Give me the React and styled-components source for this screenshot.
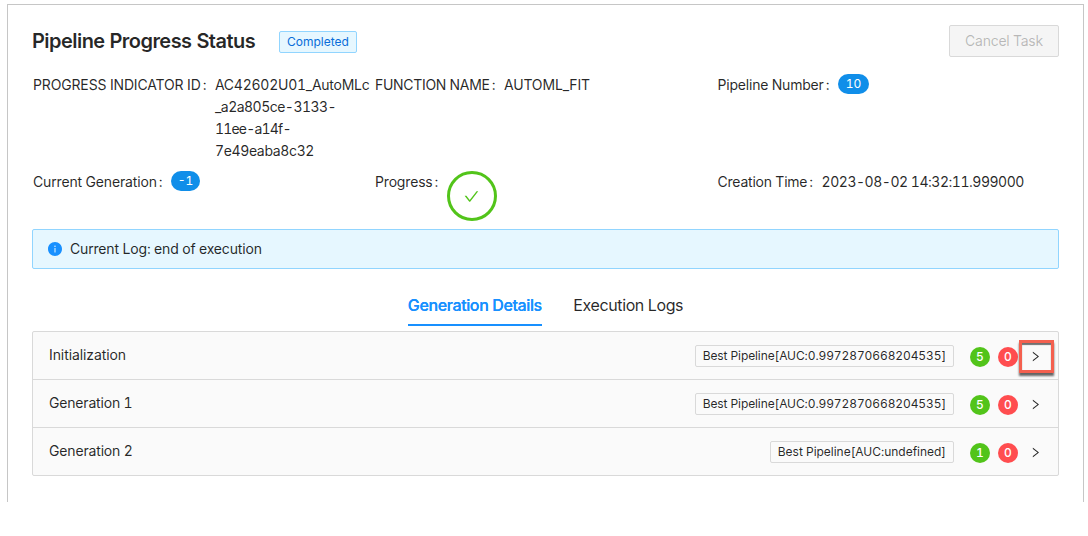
import React from "react";
import styled, { createGlobalStyle } from "styled-components";
import { AiOutlineCheck, AiOutlineRight, AiFillInfoCircle } from "react-icons/ai";

const GlobalStyle = createGlobalStyle`
  *, *::before, *::after { box-sizing: border-box; }
  body {
    margin: 0;
    background: #fff;
    color: rgba(0, 0, 0, 0.85);
    font-family: Inter, "Liberation Sans", sans-serif;
    font-size: 14px;
    line-height: 22px;
    font-variant-numeric: tabular-nums;
  }
`;

const Panel = styled.main`
  width: 1077px;
  height: 498px;
  margin: 4px 0 0 7px;
  padding: 20px 24px 0;
  border: 1px solid #c6c6c6;
  border-bottom: 0;
`;

const Header = styled.header`
  display: flex;
  align-items: flex-start;
  height: 32px;
`;

const Title = styled.h1`
  width: 223px;
  margin: 0 24px 0 0;
  font-size: 20px;
  font-weight: 600;
  line-height: 32px;
  letter-spacing: -0.54px;
  white-space: nowrap;
`;

const Tag = styled.span`
  flex: none;
  height: 22px;
  margin-top: ${(p) => (p.$info ? 6 : 1)}px;
  padding: 0 7px;
  border: 1px solid ${(p) => (p.$info ? "#91d5ff" : "#d9d9d9")};
  border-radius: 2px;
  background: ${(p) => (p.$info ? "#e6f7ff" : "#fafafa")};
  color: ${(p) => (p.$info ? "#096dd9" : "inherit")};
  font-size: 12px;
  line-height: 20px;
  letter-spacing: ${(p) => p.$tracking || 0}px;
  white-space: nowrap;
`;

const CancelButton = styled.button`
  width: 110px;
  height: 32px;
  margin-left: auto;
  padding: 0;
  border: 1px solid #d9d9d9;
  border-radius: 2px;
  background: #f5f5f5;
  color: rgba(0, 0, 0, 0.25);
  font: inherit;
  letter-spacing: -0.254px;
`;

const Descriptions = styled.dl`
  display: grid;
  grid-template-columns: 342px 342.5px 342px;
  grid-template-rows: 97px 58px;
  margin: 17px 0 0 1px;
`;

const Item = styled.div`
  display: flex;
  align-items: flex-start;
`;

const Label = styled.dt`
  letter-spacing: ${(p) => p.$tracking}px;
  white-space: nowrap;

  &::after {
    content: ":";
    margin: 0 8.5px 0 2px;
    letter-spacing: 0;
  }
`;

const Value = styled.dd`
  margin: 0;
  letter-spacing: ${(p) => p.$tracking || 0}px;
  white-space: nowrap;
`;

const Line = styled.div`
  letter-spacing: ${(p) => p.$tracking}px;
`;

const Pill = styled.span`
  display: block;
  width: ${(p) => p.$width}px;
  height: 20px;
  border-radius: 10px;
  background: #108ee9;
  color: #fff;
  font-size: 12px;
  line-height: 20px;
  text-align: center;
`;

const ProgressCircle = styled.div`
  display: flex;
  align-items: center;
  justify-content: center;
  width: 50px;
  height: 50px;
  border: 3px solid #52c41a;
  border-radius: 50%;
  color: #52c41a;

  svg {
    margin-right: 1px;
  }
`;

const Alert = styled.div`
  display: flex;
  align-items: center;
  height: 40px;
  padding: 0 14px;
  border: 1px solid #91d5ff;
  border-radius: 2px;
  background: #e6f7ff;
  letter-spacing: -0.165px;

  svg {
    margin-right: 7px;
    color: #1890ff;
  }
`;

const Tabs = styled.nav`
  display: flex;
  justify-content: center;
  gap: 31.5px;
  height: 57px;
  margin-top: 5px;
`;

const Tab = styled.div`
  height: 52px;
  padding-top: 19px;
  border-bottom: 2px solid ${(p) => (p.$active ? "#1890ff" : "transparent")};
  color: ${(p) => (p.$active ? "#1890ff" : "inherit")};
  font-size: 16px;
  font-weight: ${(p) => (p.$active ? 500 : 400)};
  line-height: 24px;
  letter-spacing: ${(p) => p.$tracking}px;
  text-shadow: ${(p) => (p.$active ? "0 0 0.25px currentColor" : "none")};
  white-space: nowrap;
`;

const Collapse = styled.section`
  border: 1px solid #d9d9d9;
  border-radius: 2px;
  background: #fafafa;
`;

const Row = styled.div`
  display: flex;
  align-items: flex-start;
  height: 48px;
  padding: 12px 16px;

  & + & {
    border-top: 1px solid #d9d9d9;
  }
  &:first-child {
    height: 47px;
  }
`;

const RowName = styled.span`
  margin-right: auto;
  letter-spacing: ${(p) => p.$tracking}px;
`;

const Counts = styled.div`
  display: flex;
  gap: 8px;
  margin: 3px 0 0 16px;
`;

const Count = styled.span`
  width: 20px;
  height: 20px;
  border-radius: 50%;
  background: ${(p) => (p.$failed ? "#ff4d4f" : "#52c41a")};
  color: #fff;
  font-size: 12px;
  font-weight: 500;
  line-height: 20px;
  text-align: center;
`;

const Expand = styled.span`
  position: relative;
  display: flex;
  align-items: center;
  justify-content: flex-end;
  width: 12px;
  height: 22px;
  margin: 1px 0 0 12px;

  svg {
    flex: none;
  }
`;

const Highlight = styled.span`
  position: absolute;
  top: -5px;
  left: -11px;
  width: 35px;
  height: 33px;
  border: 3px solid #f4604f;
  box-shadow: 0 3px 2px rgba(0, 0, 0, 0.6), inset 0 2px 1px rgba(0, 0, 0, 0.55);
`;

const generations = [
  { name: "Initialization", tracking: -0.09, best: "0.9972870668204535", tagTracking: -0.1, passed: 5, failed: 0, highlighted: true },
  { name: "Generation 1", tracking: -0.18, best: "0.9972870668204535", tagTracking: -0.1, passed: 5, failed: 0 },
  { name: "Generation 2", tracking: -0.16, best: "undefined", tagTracking: -0.02, passed: 1, failed: 0 },
];

export default function App() {
  return (
    <>
      <GlobalStyle />
      <Panel>
        <Header>
          <Title>Pipeline Progress Status</Title>
          <Tag $info>Completed</Tag>
          <CancelButton disabled>Cancel Task</CancelButton>
        </Header>
        <Descriptions>
          <Item>
            <Label $tracking={-0.15}>PROGRESS INDICATOR ID</Label>
            <Value>
              <Line $tracking={-0.25}>AC42602U01_AutoMLc</Line>
              <Line $tracking={-0.52}>_a2a805ce-3133-</Line>
              <Line $tracking={-0.8}>11ee-a14f-</Line>
              <Line $tracking={-0.35}>7e49eaba8c32</Line>
            </Value>
          </Item>
          <Item>
            <Label $tracking={-0.3}>FUNCTION NAME</Label>
            <Value $tracking={-0.16}>AUTOML_FIT</Value>
          </Item>
          <Item>
            <Label $tracking={-0.2}>Pipeline Number</Label>
            <Value><Pill $width={31}>10</Pill></Value>
          </Item>
          <Item>
            <Label $tracking={-0.155}>Current Generation</Label>
            <Value><Pill $width={29}>-1</Pill></Value>
          </Item>
          <Item>
            <Label $tracking={-0.17}>Progress</Label>
            <Value>
              <ProgressCircle><AiOutlineCheck size={17} /></ProgressCircle>
            </Value>
          </Item>
          <Item>
            <Label $tracking={-0.22}>Creation Time</Label>
            <Value $tracking={-0.48}>2023-08-02 14:32:11.999000</Value>
          </Item>
        </Descriptions>
        <Alert>
          <AiFillInfoCircle size={16} />
          Current Log: end of execution
        </Alert>
        <Tabs>
          <Tab $active $tracking={-0.381}>Generation Details</Tab>
          <Tab $tracking={-0.391}>Execution Logs</Tab>
        </Tabs>
        <Collapse>
          {generations.map((g) => (
            <Row key={g.name}>
              <RowName $tracking={g.tracking}>{g.name}</RowName>
              <Tag $tracking={g.tagTracking}>{`Best Pipeline[AUC:${g.best}]`}</Tag>
              <Counts>
                <Count>{g.passed}</Count>
                <Count $failed>{g.failed}</Count>
              </Counts>
              <Expand>
                <AiOutlineRight size={13} />
                {g.highlighted && <Highlight />}
              </Expand>
            </Row>
          ))}
        </Collapse>
      </Panel>
    </>
  );
}
